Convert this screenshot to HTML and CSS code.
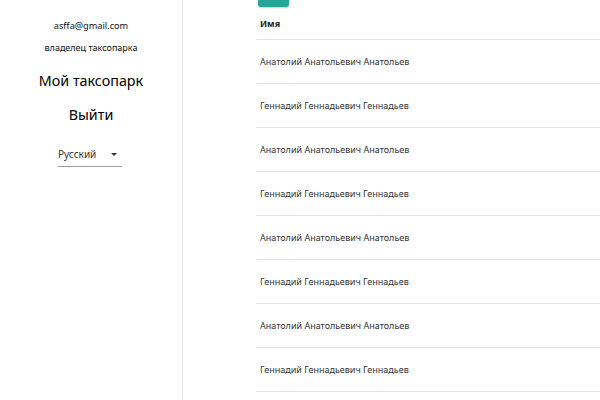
FILE: index.html
```html
<!DOCTYPE html>
<html lang="ru">
<head>
<meta charset="utf-8">
<link rel="stylesheet" href="styles.css">
</head>
<body>
<div class="app">
  <aside class="sidebar">
    <div class="email">asffa@gmail.com</div>
    <div class="role">владелец таксопарка</div>
    <div class="nav-link">Мой таксопарк</div>
    <div class="nav-link logout">Выйти</div>
    <div class="select">
      <span class="select-value">Русский</span>
      <span class="caret"></span>
    </div>
  </aside>
  <main class="content">
    <div class="btn"></div>
    <table class="table">
      <thead>
        <tr><th>Имя</th></tr>
      </thead>
      <tbody>
        <tr><td>Анатолий Анатольевич Анатольев</td></tr>
        <tr><td>Геннадий Геннадьевич Геннадьев</td></tr>
        <tr><td>Анатолий Анатольевич Анатольев</td></tr>
        <tr><td>Геннадий Геннадьевич Геннадьев</td></tr>
        <tr><td>Анатолий Анатольевич Анатольев</td></tr>
        <tr><td>Геннадий Геннадьевич Геннадьев</td></tr>
        <tr><td>Анатолий Анатольевич Анатольев</td></tr>
        <tr><td>Геннадий Геннадьевич Геннадьев</td></tr>
      </tbody>
    </table>
  </main>
</div>
</body>
</html>
```
FILE: styles.css
```css
html, body {
  margin: 0;
  padding: 0;
  background: #fff;
  font-family: "Noto Sans", "Open Sans", sans-serif;
  color: #111;
}
.app {
  display: flex;
  width: 600px;
  height: 400px;
  overflow: hidden;
}
.sidebar {
  width: 182px;
  flex: none;
  border-right: 1px solid #e4e4e4;
  display: flex;
  flex-direction: column;
  align-items: center;
  padding-top: 19px;
  box-sizing: content-box;
}
.email {
  font-size: 9.2px;
  line-height: 14px;
}
.role {
  font-size: 9px;
  line-height: 14px;
  margin-top: 8px;
}
.nav-link {
  font-size: 14.3px;
  line-height: 20px;
  margin-top: 16px;
  color: #000;
}
.logout {
  margin-top: 14px;
}
.select {
  margin-top: 17px;
  width: 64px;
  height: 24px;
  border-bottom: 1px solid #9e9e9e;
  display: flex;
  align-items: center;
  justify-content: space-between;
  position: relative;
  left: -1px;
}
.select-value {
  font-size: 10px;
  color: #333;
}
.caret {
  width: 0;
  height: 0;
  border-left: 3.5px solid transparent;
  border-right: 3.5px solid transparent;
  border-top: 3.5px solid #333;
  margin-right: 5px;
}
.content {
  flex: 1;
  padding-left: 73px;
}
.btn {
  width: 31px;
  height: 7px;
  margin-left: 2px;
  background: #26a69a;
  border-radius: 0 0 3px 3px;
  box-shadow: 0 1px 2px rgba(0,0,0,0.2);
}
.table {
  border-collapse: collapse;
  width: 100%;
}
.table th, .table td {
  text-align: left;
  padding: 0 0 0 4px;
  border-bottom: 1px solid #e0e0e0;
}
.table th {
  font-size: 9px;
  font-weight: 700;
  height: 32px;
  color: #222;
}
.table td {
  font-size: 9px;
  height: 43px;
  color: #333;
}
```
